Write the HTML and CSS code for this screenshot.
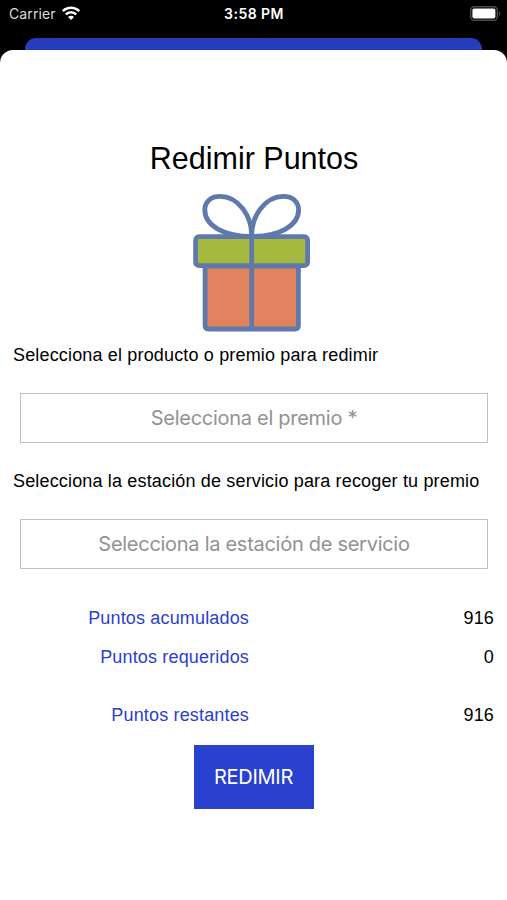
FILE: index.html
```
<!DOCTYPE html>
<html lang="es">
<head>
    <meta charset="UTF-8">
    <meta name="viewport" content="width=device-width, initial-scale=1.0">
    <title>Redimir Puntos</title>
    <link rel="stylesheet" href="styles.css">
</head>
<body>
    <header class="status-bar">
        <div class="carrier">
            <span>Carrier</span>
            <svg class="wifi" width="18" height="14" viewBox="0 0 18 14">
                <path d="M.8 5.2C5.2.6 12.8.6 17.200 5.200" fill="none" stroke="#fff" stroke-width="2.6"/>
                <path d="M3.800 8.400C6.700 5.500 11.300 5.500 14.200 8.400" fill="none" stroke="#fff" stroke-width="2.400"/>
                <path d="M6 10.900C7.700 9.200 10.300 9.200 12 10.900L9 13.900z" fill="#fff"/>
            </svg>
        </div>
        <span class="time">3:58 PM</span>
        <svg class="battery" width="31" height="15" viewBox="0 0 31 15">
            <rect x=".7" y=".7" width="26.6" height="13.6" rx="3.8" fill="none" stroke="#4c4c4c" stroke-width="1.4"/>
            <rect x="2.4" y="2.6" width="23" height="9.8" rx="2" fill="#fff"/>
            <path d="M28.8 5.2C30.7 6 30.7 9 28.8 9.8z" fill="#4c4c4c"/>
        </svg>
    </header>
    <div class="back-card"></div>

    <main class="sheet">
        <h1>Redimir Puntos</h1>
        <svg class="gift" width="118" height="140" viewBox="193 193 118 140">
            <g stroke="#6079ab" stroke-width="4.8" stroke-linejoin="round">
                <path d="M205.100 266V325.500Q205.100 329 208.600 329H294.900Q298.400 329 298.400 325.500V266z" fill="#e2835f"/>
                <path d="M251.700 235.500C251.700 216 238.500 196.300 220 196.300C210.500 196.300 204.800 202 204.800 210C204.800 225.500 224 236.500 251.700 236.500z" fill="#fff"/>
                <path d="M251.700 235.500C251.700 216 264.900 196.300 283.400 196.300C292.900 196.300 298.600 202 298.600 210C298.600 225.500 279.400 236.500 251.700 236.500z" fill="#fff"/>
                <rect x="195.600" y="236.700" width="112" height="29" rx="3.500" fill="#a5b941"/>
                <path d="M251.700 236V329" fill="none"/>
            </g>
        </svg>

        <form class="redeem-form">
            <label>Selecciona el producto o premio para redimir</label>
            <button type="button" class="picker">Selecciona el premio *</button>
            <label>Selecciona la estación de servicio para recoger tu premio</label>
            <button type="button" class="picker">Selecciona la estación de servicio</button>

            <div class="points">
                <span class="name">Puntos acumulados</span>
                <span class="value">916</span>
                <span class="name">Puntos requeridos</span>
                <span class="value">0</span>
                <span class="name total">Puntos restantes</span>
                <span class="value total">916</span>
            </div>

            <button type="button" class="submit">REDIMIR</button>
        </form>
    </main>
</body>
</html>
```
FILE: styles.css
```
* {
    box-sizing: border-box;
}
body {
    margin: 0;
    height: 900px;
    display: flex;
    flex-direction: column;
    overflow: hidden;
    background-color: #000;
    font-family: "Liberation Sans", Arial, sans-serif;
    color: #000;
}
.status-bar {
    display: grid;
    grid-template-columns: 1fr auto 1fr;
    align-items: center;
    height: 38px;
    padding: 0 6px 11px 9px;
    font-family: Inter, sans-serif;
    font-size: 14px;
    color: #fff;
}
.carrier {
    display: flex;
    align-items: center;
    gap: 6px;
    color: #ddd;
}
.carrier span {
    letter-spacing: 0.1px;
}
.wifi {
    margin-top: -2px;
}
.time {
    margin-right: 2px;
    font-weight: 600;
    letter-spacing: 0.45px;
}
.battery {
    justify-self: end;
    margin-top: -1px;
}
.back-card {
    height: 12px;
    margin: 0 25px;
    border-radius: 11px 11px 0 0;
    background-color: #263cba;
}
.sheet {
    flex: 1;
    display: flex;
    flex-direction: column;
    align-items: center;
    padding: 90px 13px 0;
    border-radius: 13px 13px 0 0;
    background-color: #fff;
}
h1 {
    margin: 0;
    padding-left: 1px;
    font-size: 30.5px;
    font-weight: normal;
    line-height: 36px;
}
.gift {
    margin: 17px 0 0 -4px;
}
.redeem-form {
    width: 100%;
    display: flex;
    flex-direction: column;
    margin-top: 11px;
}
.redeem-form label {
    font-size: 18px;
    letter-spacing: 0.16px;
    line-height: 22px;
    white-space: nowrap;
}
.picker {
    height: 50px;
    margin: 27px 6px 27px 7px;
    padding: 0;
    border: 1px solid #c0c0c0;
    background-color: #fff;
    font-family: Inter, sans-serif;
    font-size: 20px;
    letter-spacing: -0.28px;
    color: #929292;
}
.points {
    display: grid;
    grid-template-columns: 236px 1fr;
    row-gap: 17px;
    margin-top: 11px;
    font-size: 18px;
    letter-spacing: 0.16px;
    line-height: 22px;
    text-align: right;
}
.points .name {
    color: #2b40ce;
}
.points .total {
    margin-top: 19px;
}
.submit {
    align-self: center;
    width: 120px;
    height: 64px;
    margin-top: 19px;
    padding: 0;
    border: none;
    background-color: #2a41d0;
    font-family: Inter, sans-serif;
    font-size: 20px;
    letter-spacing: -0.3px;
    color: #fff;
}
```
